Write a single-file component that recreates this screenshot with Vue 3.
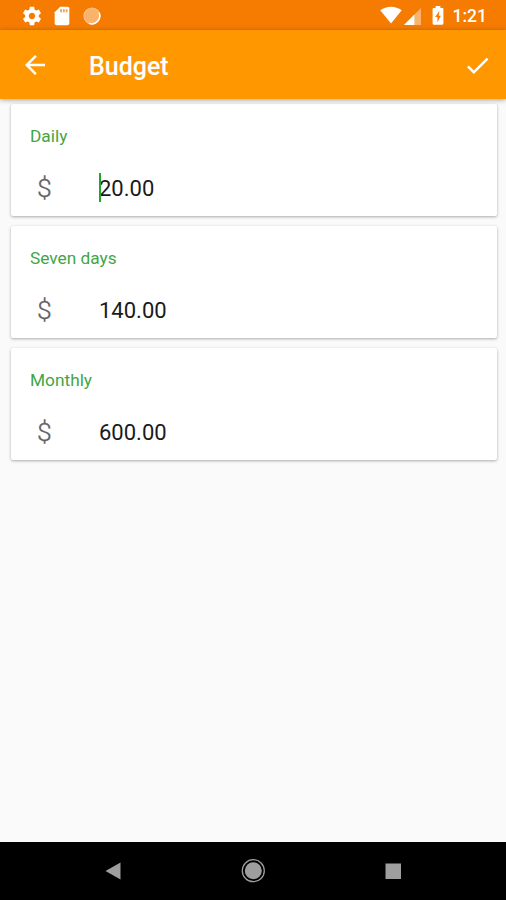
<script setup>
import { ref } from 'vue';

const time = '1:21';
const activeField = ref('daily');

const budgets = ref([
  { id: 'daily', label: 'Daily', amount: 20 },
  { id: 'weekly', label: 'Seven days', amount: 140 },
  { id: 'monthly', label: 'Monthly', amount: 600 }
]);
</script>

<template>
  <div class="budget-app">
    <div class="status-bar">
      <div class="status-left">
        <svg class="gear" viewBox="0 0 24 24" width="22" height="22">
          <path fill="#fff" d="M19.43 12.98c.04-.32.07-.64.07-.98s-.03-.66-.07-.98l2.11-1.65c.19-.15.24-.42.12-.64l-2-3.46c-.12-.22-.39-.3-.61-.22l-2.49 1c-.52-.4-1.08-.73-1.69-.98l-.38-2.65C14.46 2.18 14.25 2 14 2h-4c-.25 0-.46.18-.49.42l-.38 2.65c-.61.25-1.17.59-1.69.98l-2.49-1c-.23-.09-.49 0-.61.22l-2 3.46c-.13.22-.07.49.12.64l2.11 1.65c-.04.32-.07.65-.07.98s.03.66.07.98l-2.11 1.65c-.19.15-.24.42-.12.64l2 3.46c.12.22.39.3.61.22l2.49-1c.52.4 1.08.73 1.69.98l.38 2.65c.03.24.24.42.49.42h4c.25 0 .46-.18.49-.42l.38-2.65c.61-.25 1.17-.59 1.69-.98l2.49 1c.23.09.49 0 .61-.22l2-3.46c.12-.22.07-.49-.12-.64l-2.11-1.65zM12 15.5c-1.93 0-3.5-1.57-3.5-3.5s1.57-3.5 3.5-3.5 3.5 1.57 3.5 3.5-1.57 3.5-3.5 3.5z" />
        </svg>
        <svg class="sd" viewBox="0 0 24 24" width="22" height="22">
          <path fill="#fff" d="M18 2h-8L4.020 8 4 20c0 1.100.9 2 2 2h12c1.100 0 2-.9 2-2V4c0-1.100-.9-2-2-2z" />
          <path fill="#f9a04a" d="M10 4.500h2V8h-2zM13 4.500h2V8h-2zM16 4.500h2V8h-2z" />
        </svg>
        <svg class="sync" viewBox="0 0 20 20" width="20" height="20">
          <circle cx="10" cy="10" r="8" fill="#fbb36b" stroke="#fcc48c" stroke-width="1.200" />
          <path d="M17 6.500A8 8 0 0 1 7 17.400" fill="none" stroke="#fff" stroke-width="1.500" />
        </svg>
      </div>
      <div class="status-right">
        <svg class="wifi" viewBox="0 0 22 18" width="22" height="18">
          <path fill="#fff" d="M.3 4.300C6.500-.6 15.500-.6 21.700 4.300L11 17.600z" />
        </svg>
        <svg class="signal" viewBox="0 0 18 18" width="17" height="17">
          <path fill="#fbb36b" d="M0 18L18 0v18z" />
          <path fill="#fff" d="M0 18L11 7v11z" />
        </svg>
        <svg class="battery" viewBox="0 0 12 20" width="12" height="19">
          <path fill="#fff" d="M3.500 0h5v2h2A1.200 1.200 0 0 1 11.700 3.200v15.300A1.200 1.200 0 0 1 10.500 19.700h-9A1.200 1.200 0 0 1 .3 18.500V3.200A1.200 1.200 0 0 1 1.500 2h2z" />
          <path fill="#f57c00" d="M7.500 5L3 11.700h2.400V17L9 10.200H6.800z" />
        </svg>
        <span class="time">{{ time }}</span>
      </div>
    </div>

    <header class="toolbar">
      <svg class="back" viewBox="0 0 24 24" width="30" height="30">
        <path fill="#fff" d="M20 11H7.830l5.590-5.590L12 4l-8 8 8 8 1.410-1.410L7.830 13H20v-2z" />
      </svg>
      <h1 class="title">Budget</h1>
      <svg class="done" viewBox="0 0 24 24" width="29" height="29">
        <path fill="#fff" d="M9 16.170L4.830 12l-1.420 1.410L9 19 21 7l-1.410-1.410z" />
      </svg>
    </header>

    <main class="content">
      <section v-for="b in budgets" :key="b.id" class="card" @click="activeField = b.id">
        <div class="label">{{ b.label }}</div>
        <div class="amount-row">
          <span class="currency">$</span>
          <span class="amount" :class="{ focused: activeField === b.id }">{{ b.amount.toFixed(2) }}</span>
        </div>
      </section>
    </main>

    <nav class="nav-bar">
      <svg viewBox="0 0 24 24" width="24" height="24">
        <path fill="#9e9e9e" d="M4.500 12L19.500 3.500v17z" />
      </svg>
      <svg viewBox="0 0 24 24" width="24" height="24">
        <circle cx="12.300" cy="11.700" r="11" fill="none" stroke="#9e9e9e" stroke-width="1.300" />
        <circle cx="12.300" cy="11.700" r="8.500" fill="#9e9e9e" />
      </svg>
      <svg viewBox="0 0 24 24" width="24" height="24">
        <rect x="4.500" y="4.500" width="15.500" height="15.500" fill="#9e9e9e" />
      </svg>
    </nav>
  </div>
</template>

<style>
body { margin: 0; background: #fafafa; }
</style>

<style scoped>
.budget-app { display: flex; flex-direction: column; height: 900px; font-family: Roboto, "Liberation Sans", sans-serif; background: #fafafa; }
svg { display: block; flex: none; }

/* status bar */
.status-bar { display: flex; justify-content: space-between; height: 30px; background: #f57c00; color: #fff; }
.status-left, .status-right { display: flex; align-items: center; }
.status-left { padding-left: 21px; padding-top: 1px; }
.sd { margin-left: 8px; }
.sync { margin-left: 9px; }
.status-right { padding-right: 19px; }
.signal { margin-left: 2px; margin-top: 2px; }
.battery { margin-left: 11px; margin-top: 1px; }
.time { margin-left: 9px; font-size: 17.5px; font-weight: 500; line-height: 30px; padding-top: 2px; }

/* toolbar */
.toolbar { display: flex; align-items: center; height: 69px; padding: 1px 14px 0 20px; box-sizing: border-box; background: #ff9800; color: #fff; box-shadow: 0 1px 5px rgba(0, 0, 0, 0.35); z-index: 1; }
.title { flex: 1; margin: 3px 0 0 39px; font-size: 25px; font-weight: 500; line-height: 30px; }

/* cards */
.content { flex: 1; display: flex; flex-direction: column; gap: 10px; padding: 5px 9px 0 10.5px; }
.card { height: 112px; padding: 20px 19px 0 19.5px; box-sizing: border-box; background: #fff; border-radius: 2px; box-shadow: 0 1px 3px rgba(0, 0, 0, 0.32); }
.label { color: #43a547; font-size: 17.3px; line-height: 24px; }
.amount-row { display: flex; align-items: center; height: 32px; margin-top: 25px; }
.currency { width: 62px; padding-left: 7px; color: #616161; font-size: 26.5px; line-height: 30px; margin-top: -2px; }
.currency { font-weight: 300; -webkit-text-stroke: 0.3px #616161; }
.amount { position: relative; color: #1a1a1a; font-size: 22px; line-height: 32px; }
.amount.focused::before { content: ""; position: absolute; left: 0; top: 0; width: 2px; height: 29px; background: #22a52b; }

/* navigation bar */
.nav-bar { display: flex; justify-content: center; align-items: center; gap: 116px; height: 58px; background: #000; }
</style>
